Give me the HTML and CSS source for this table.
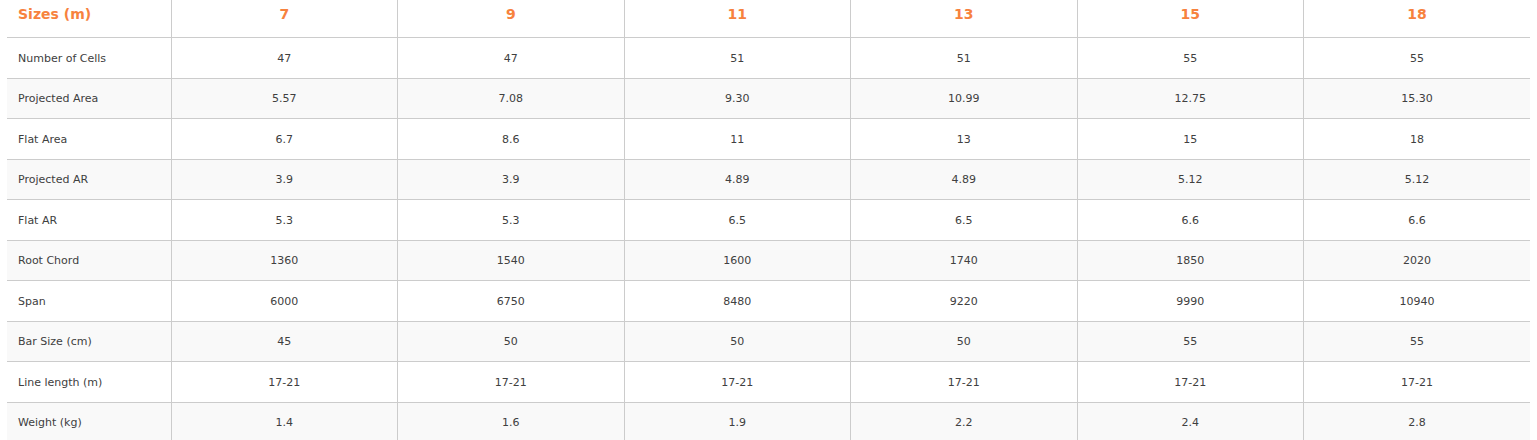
FILE: index.html
```html
<!DOCTYPE html>
<html lang="en">
<head>
<meta charset="utf-8">
<title>Sizes</title>
<link rel="stylesheet" href="styles.css">
</head>
<body>
<div class="wrap">
<table class="specs">
  <colgroup>
    <col class="c-label"><col class="c-val"><col class="c-val"><col class="c-val"><col class="c-val"><col class="c-val"><col class="c-val">
  </colgroup>
  <thead>
    <tr><th class="label">Sizes (m)</th><th>7</th><th>9</th><th>11</th><th>13</th><th>15</th><th>18</th></tr>
  </thead>
  <tbody>
    <tr><td class="label">Number of Cells</td><td>47</td><td>47</td><td>51</td><td>51</td><td>55</td><td>55</td></tr>
    <tr><td class="label">Projected Area</td><td>5.57</td><td>7.08</td><td>9.30</td><td>10.99</td><td>12.75</td><td>15.30</td></tr>
    <tr><td class="label">Flat Area</td><td>6.7</td><td>8.6</td><td>11</td><td>13</td><td>15</td><td>18</td></tr>
    <tr><td class="label">Projected AR</td><td>3.9</td><td>3.9</td><td>4.89</td><td>4.89</td><td>5.12</td><td>5.12</td></tr>
    <tr><td class="label">Flat AR</td><td>5.3</td><td>5.3</td><td>6.5</td><td>6.5</td><td>6.6</td><td>6.6</td></tr>
    <tr><td class="label">Root Chord</td><td>1360</td><td>1540</td><td>1600</td><td>1740</td><td>1850</td><td>2020</td></tr>
    <tr><td class="label">Span</td><td>6000</td><td>6750</td><td>8480</td><td>9220</td><td>9990</td><td>10940</td></tr>
    <tr><td class="label">Bar Size (cm)</td><td>45</td><td>50</td><td>50</td><td>50</td><td>55</td><td>55</td></tr>
    <tr><td class="label">Line length (m)</td><td>17-21</td><td>17-21</td><td>17-21</td><td>17-21</td><td>17-21</td><td>17-21</td></tr>
    <tr><td class="label">Weight (kg)</td><td>1.4</td><td>1.6</td><td>1.9</td><td>2.2</td><td>2.4</td><td>2.8</td></tr>
  </tbody>
</table>
</div>
</body>
</html>
```

FILE: styles.css
```css
html, body {
  margin: 0;
  padding: 0;
  background: #ffffff;
}

.wrap {
  padding: 0 7px;
}

.specs {
  width: 1523px;
  border-collapse: collapse;
  table-layout: fixed;
  font-family: "DejaVu Sans", "Noto Sans", sans-serif;
  color: #404040;
}

.c-label { width: 164px; }
.c-val { width: 226.5px; }

.specs th,
.specs td {
  text-align: center;
  border-bottom: 1px solid #cccccc;
  border-left: 1px solid #cccccc;
  padding: 0;
}

.specs th:first-child,
.specs td:first-child {
  border-left: none;
}

.specs th {
  height: 28px;
  padding-bottom: 9px;
  font-size: 14px;
  font-weight: bold;
  color: #f7823e;
  vertical-align: middle;
}

.specs td {
  height: 38.5px;
  padding-top: 1px;
  font-size: 11px;
  vertical-align: middle;
}

.specs .label {
  text-align: left;
  padding-left: 11px;
}

.specs tbody tr:nth-child(even) td {
  background: #f9f9f9;
}
```
